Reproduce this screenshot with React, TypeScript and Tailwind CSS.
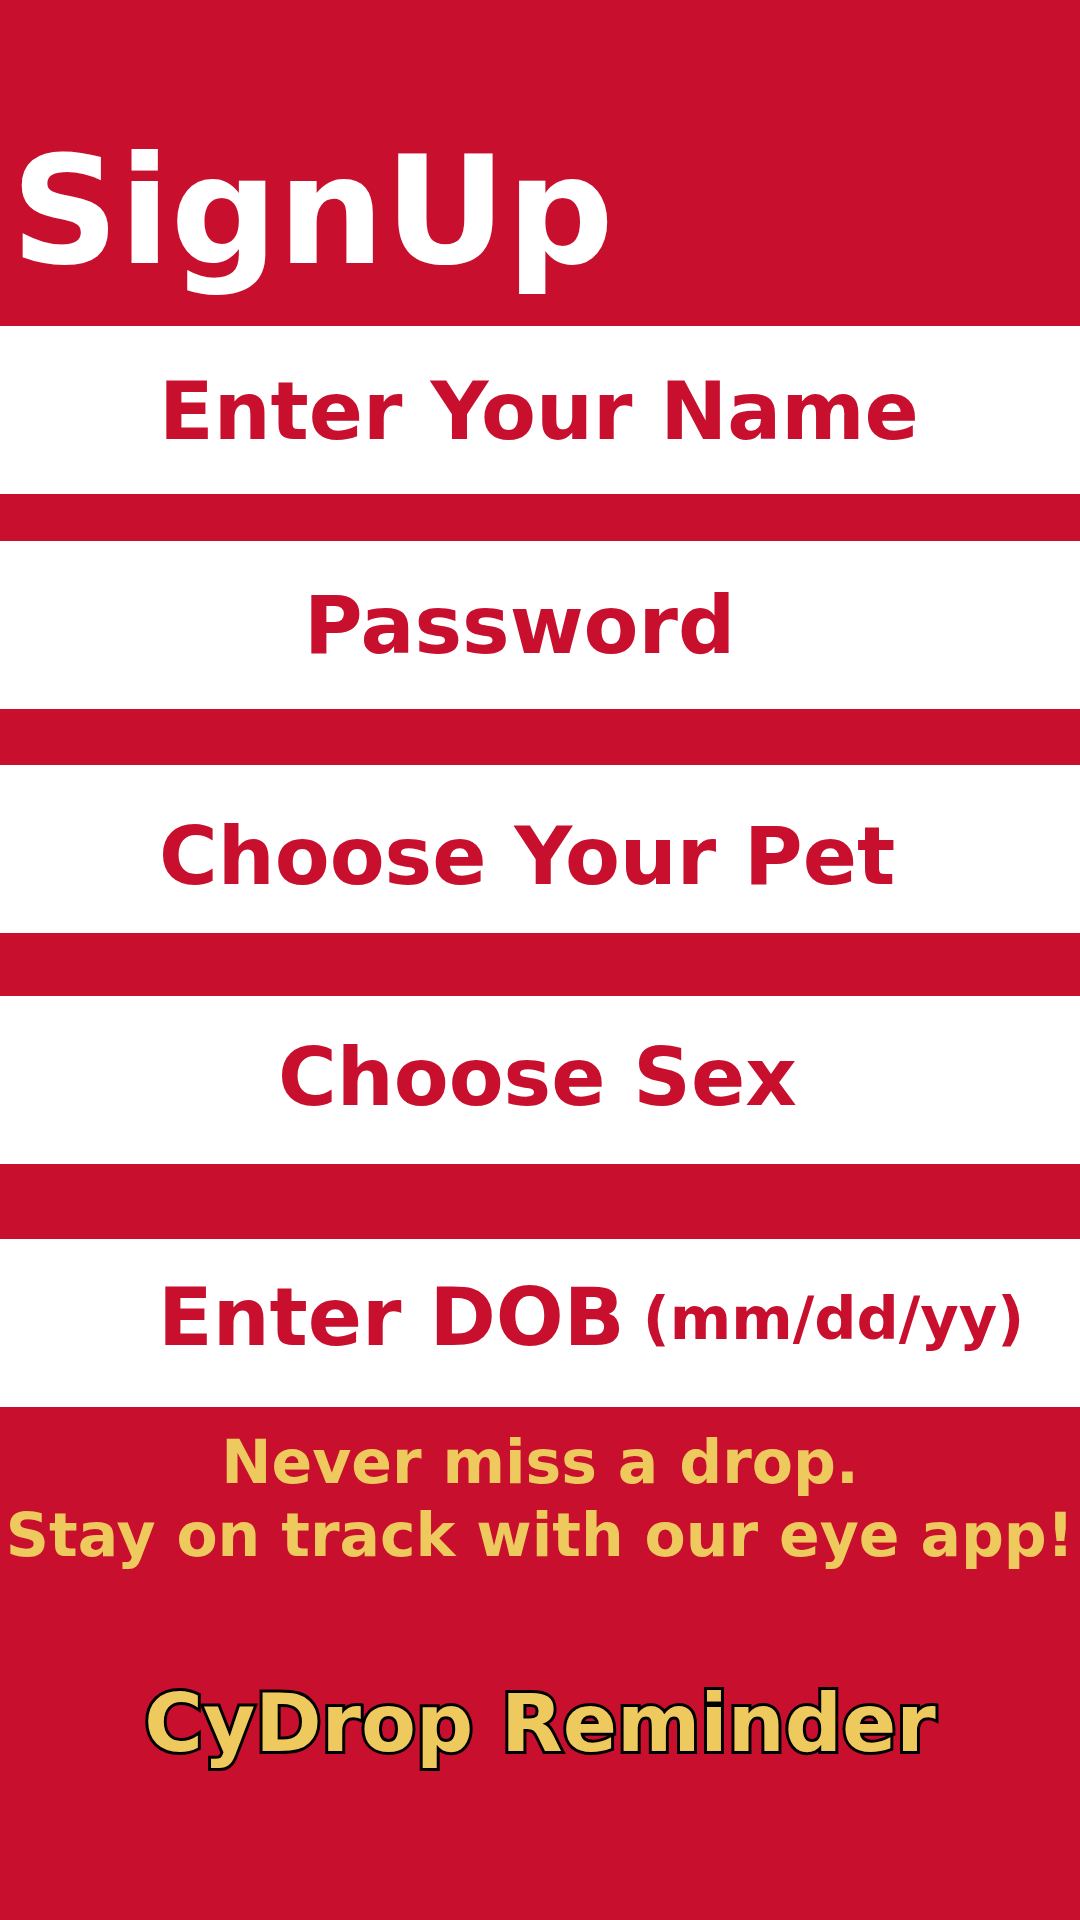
import React from 'react';

const RED = 'bg-[#c8102e]';

// form rows: label text + left offset + top offset inside the white band
const ROWS = [
  { label: 'Enter Your Name', gap: 'mt-0', pad: 'pl-[159px] pt-[46px]' },
  { label: 'Password', gap: 'mt-[47px]', pad: 'pl-[304px] pt-[45px]' },
  { label: 'Choose Your Pet', gap: 'mt-[56px]', pad: 'pl-[159px] pt-[52px]' },
  { label: 'Choose Sex', gap: 'mt-[63px]', pad: 'pl-[278px] pt-[42px]' },
];

function Row({ label, gap, pad }: { label: string; gap: string; pad: string }) {
  return (
    <div className={`${gap} h-[168px] bg-white ${pad}`}>
      <span className="block text-[80px] leading-none text-[#c8102e] whitespace-nowrap">{label}</span>
    </div>
  );
}

export default function App() {
  return (
    <div className={`w-[1080px] h-[1920px] ${RED} font-['DejaVu_Sans',sans-serif] font-bold overflow-hidden`}>
      {/* Header */}
      <header className="h-[326px] pl-[11px] pt-[136px]">
        <h1 className="text-[150px] leading-none text-white whitespace-nowrap">SignUp</h1>
      </header>

      {/* Form bands */}
      {ROWS.map(r => (
        <Row key={r.label} {...r} />
      ))}
      <div className="mt-[75px] h-[168px] bg-white pl-[158px] pt-[39px]">
        <div className="flex items-end text-[#c8102e] whitespace-nowrap">
          <span className="text-[80px] leading-none">Enter DOB</span>
          <span className="ml-[18px] mb-[10px] text-[59px] leading-none">(mm/dd/yy)</span>
        </div>
      </div>

      {/* Footer */}
      <div className="pt-[19px] text-center">
        <p className="text-[60px] leading-[73px] text-[#eec95e] whitespace-nowrap">
          Never miss a drop.
          <br />
          Stay on track with our eye app!
        </p>
        <p className="mt-[112px] text-[80px] leading-none text-[#eec95e] whitespace-nowrap [-webkit-text-stroke:6px_#000] [paint-order:stroke_fill]">
          CyDrop Reminder
        </p>
      </div>
    </div>
  );
}
